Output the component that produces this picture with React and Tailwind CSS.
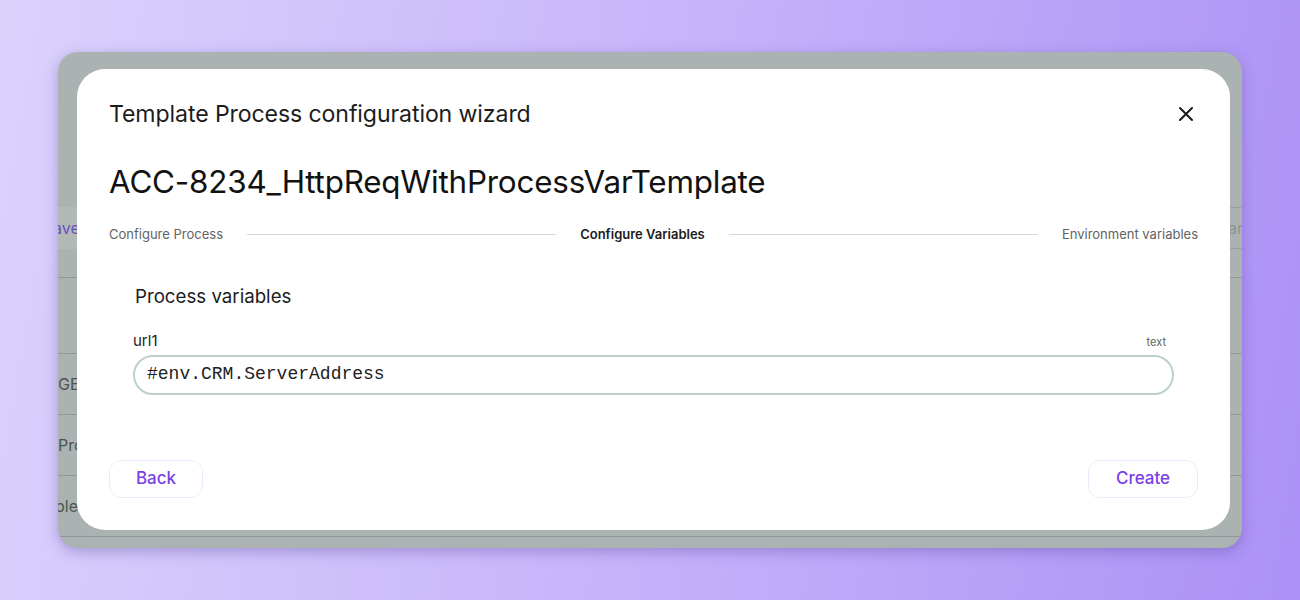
import React from 'react';

const font = { fontFamily: 'Inter, "Noto Sans", sans-serif' };

function BackgroundApp() {
  // faint app behind the dimmed overlay
  return (
    <div className="flex flex-col h-full text-[16px] text-[#4d5352]">
      <div className="h-[155px] shrink-0" />
      <div className="h-[42px] shrink-0 flex items-center justify-between">
        <div className="h-full w-[60px] bg-[#b2bab8] flex items-center text-[#6a4fc0]">
          <span className="-ml-[5px]">ave</span>
        </div>
        <div className="h-full w-[60px] border-y border-[#98a19f] flex items-center text-[#8d9694] pl-[46px]">ar</div>
      </div>
      <div className="h-[29px] shrink-0 border-b border-[#8f9896]" />
      <div className="h-[76px] shrink-0 border-b border-[#8f9896]" />
      <div className="h-[61px] shrink-0 border-b border-[#8f9896] flex items-center">GE</div>
      <div className="h-[61px] shrink-0 border-b border-[#8f9896] flex items-center">Pro</div>
      <div className="h-[61px] shrink-0 border-b border-[#8f9896] flex items-center">
        <span className="-ml-[3px]">ble</span>
      </div>
    </div>
  );
}

function Step({ children, active }) {
  return (
    <span
      className={
        active
          ? 'text-[13px] font-semibold text-[#1b1b1b] whitespace-nowrap'
          : 'text-[13px] text-[#5f6463] whitespace-nowrap'
      }
    >
      {children}
    </span>
  );
}

export default function App() {
  return (
    <div
      className="w-[1300px] h-[600px] relative overflow-hidden bg-[linear-gradient(100deg,#dbd2fc_0%,#c6b4fa_50%,#ab91f6_100%)]"
      style={font}
    >
      <div className="absolute left-[58px] top-[52px] w-[1184px] h-[496px] rounded-[20px] bg-[#aab3b1] overflow-hidden shadow-[0_4px_14px_rgba(80,60,150,0.35)]">
        <BackgroundApp />

        {/* modal */}
        <div className="absolute left-[19px] top-[17px] right-[12px] bottom-[18px] bg-white rounded-[28px] px-8 pt-[29px] flex flex-col">
          <div className="flex items-center justify-between">
            <h2 className="text-[23.1px] leading-[32px] text-[#1c1c1c] tracking-[-0.1px]">
              Template Process configuration wizard
            </h2>
            <svg width="16" height="16" viewBox="0 0 16 16" className="mr-[4px]">
              <path d="M2 2L14 14M14 2L2 14" stroke="#1a1a1a" strokeWidth="2" strokeLinecap="round" />
            </svg>
          </div>

          <h1 className="mt-[32px] text-[31.4px] leading-[40px] text-[#111] tracking-[-0.2px]">
            ACC-8234_HttpReqWithProcessVarTemplate
          </h1>

          <div className="mt-[23px] flex items-center gap-6">
            <Step>Configure Process</Step>
            <div className="flex-1 h-px bg-[#cfdcda]" />
            <Step active>Configure Variables</Step>
            <div className="flex-1 h-px bg-[#cfdcda]" />
            <Step>Environment variables</Step>
          </div>

          <div className="mt-[40px] px-[24px]">
            <h3 className="text-[18.7px] leading-[24px] text-[#1c1c1c] pl-[2px]">Process variables</h3>
            <div className="mt-[22px] flex items-end justify-between">
              <span className="text-[15px] leading-[20px] text-[#1c1c1c]">url1</span>
              <span className="text-[11px] text-[#5d6261] mr-[8px]">text</span>
            </div>
            <div className="mt-[4px] h-[40px] rounded-full border-2 border-[#bcd0cb] flex items-center px-[12px]">
              <span
                className="text-[18px] text-[#222]"
                style={{ fontFamily: '"Liberation Mono", "Courier New", monospace' }}
              >
                #env.CRM.ServerAddress
              </span>
            </div>
          </div>

          <div className="mt-auto mb-[32px] flex items-center justify-between">
            <button className="w-[94px] h-[38px] rounded-[12px] border border-[#efeafb] text-[17px] font-medium text-[#7b3fe6]">
              Back
            </button>
            <button className="w-[110px] h-[38px] rounded-[12px] border border-[#efeafb] text-[17px] font-medium text-[#7b3fe6]">
              Create
            </button>
          </div>
        </div>
      </div>
    </div>
  );
}
